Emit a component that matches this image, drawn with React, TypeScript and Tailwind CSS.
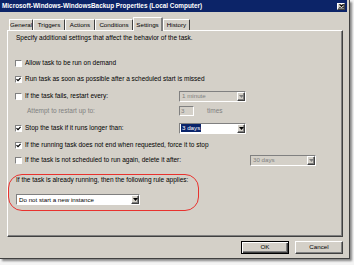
import React from 'react'

const raised = 'border border-t-white border-l-white border-r-[#404040] border-b-[#404040] shadow-[inset_-1px_-1px_0_#808080]'
const sunken = 'border border-t-[#808080] border-l-[#808080] border-r-white border-b-white'

function Arrow({ disabled = false }: { disabled?: boolean }) {
  return (
    <span className={`flex-shrink-0 w-[8px] h-full bg-[#d4d0c8] flex items-center justify-center ${raised}`}>
      <svg width="5" height="3" viewBox="0 0 5 3">
        <path d="M0 0h5L2.5 3z" fill={disabled ? '#808080' : '#000'} />
      </svg>
    </span>
  )
}

function Combo({ value, width, disabled = false, selected = false }: { value: string; width: string; disabled?: boolean; selected?: boolean }) {
  return (
    <div className={`flex h-[11px] text-[6.2px] ${width} ${sunken} ${disabled ? 'bg-[#d4d0c8]' : 'bg-white'}`}>
      <div className="flex-1 flex items-center pl-px min-w-0">
        <span
          className={`leading-[8px] px-px ${selected ? 'bg-[#0a246a] text-white' : disabled ? 'text-[#808080]' : 'text-black'}`}
        >
          {value}
        </span>
      </div>
      <Arrow disabled={disabled} />
    </div>
  )
}

function Check({ checked = false }: { checked?: boolean }) {
  return (
    <span className={`flex-shrink-0 w-[7px] h-[7px] bg-white flex items-center justify-center ${sunken}`}>
      {checked && (
        <svg width="5" height="5" viewBox="0 0 5 5">
          <path d="M0.5 2.2 L2 3.7 L4.6 0.8" stroke="#000" strokeWidth="1.2" fill="none" />
        </svg>
      )}
    </span>
  )
}

function CheckRow({ label, checked, mt, children, labelW }: { label: string; checked?: boolean; mt: string; children?: React.ReactNode; labelW?: string }) {
  return (
    <div className={`flex items-center h-[10px] ${mt}`}>
      <div className={`flex items-center gap-[3px] ${labelW ?? ''}`}>
        <Check checked={checked} />
        <span className="whitespace-nowrap">{label}</span>
      </div>
      {children}
    </div>
  )
}

const tabs = [
  { name: 'General', w: 'w-[24px]' },
  { name: 'Triggers', w: 'w-[32px]' },
  { name: 'Actions', w: 'w-[30px]' },
  { name: 'Conditions', w: 'w-[38px]' },
  { name: 'Settings', w: 'w-[30px]', active: true },
  { name: 'History', w: 'w-[27px]' },
]

export default function App() {
  return (
    <div className="w-[354px] h-[265px] bg-[#f4f4f4] font-['Liberation_Sans',Arial,sans-serif] text-[6.5px] text-black overflow-hidden">
      <div className="w-[350px] h-[259px] bg-[#d4d0c8] border-r border-b border-[#404040] shadow-[2px_2px_2px_rgba(0,0,0,0.45)] flex flex-col">
        {/* title bar */}
        <div className="h-[12px] w-[347px] bg-[#0c2468] flex items-center justify-between pl-[2px] pr-[2px]">
          <span className="text-white font-bold text-[6.4px] whitespace-nowrap">
            Microsoft-Windows-WindowsBackup Properties (Local Computer)
          </span>
          <span className={`w-[8px] h-[7px] bg-[#d4d0c8] flex items-center justify-center ${raised}`}>
            <svg width="5" height="4" viewBox="0 0 5 4">
              <path d="M0.5 0.3 L4.5 3.7 M4.5 0.3 L0.5 3.7" stroke="#000" strokeWidth="1.1" />
            </svg>
          </span>
        </div>

        <div className="flex flex-col pl-[7px] pr-[6px]">
          {/* tabs */}
          <div className="flex items-end h-[13px] mt-[5px] pl-[2px] relative z-10 text-[6.2px]">
            {tabs.map(t =>
              t.active ? (
                <div
                  key={t.name}
                  className={`${t.w} h-[14px] -mb-px bg-[#d4d0c8] border-t border-l border-white border-r-2 border-r-[#808080] rounded-t-[1px] flex items-start justify-center pt-[2px]`}
                >
                  {t.name}
                </div>
              ) : (
                <div
                  key={t.name}
                  className={`${t.w} h-[11px] border-t border-l border-white border-r border-r-[#404040] rounded-t-[1px] flex items-center justify-center`}
                >
                  {t.name}
                </div>
              )
            )}
          </div>

          {/* panel */}
          <div className={`h-[207px] flex flex-col pl-[7px] pt-[2px] ${raised}`}>
            <div className="h-[10px] leading-[10px] pl-px whitespace-nowrap">
              Specify additional settings that affect the behavior of the task.
            </div>

            <CheckRow label="Allow task to be run on demand" mt="mt-[15px]" />
            <CheckRow label="Run task as soon as possible after a scheduled start is missed" checked mt="mt-[6px]" />
            <CheckRow label="If the task fails, restart every:" mt="mt-[7px]" labelW="w-[164px]">
              <Combo value="1 minute" width="w-[67px]" disabled />
            </CheckRow>

            <div className="flex items-center h-[10px] mt-[5px] text-[#808080]">
              <span className="w-[164px] pl-[12px] whitespace-nowrap">Attempt to restart up to:</span>
              <span className={`w-[15px] h-[10px] bg-[#d4d0c8] flex items-center pl-px text-[6.2px] ${sunken}`}>3</span>
              <span className="ml-[13px]">times</span>
            </div>

            <CheckRow label="Stop the task if it runs longer than:" checked mt="mt-[7px]" labelW="w-[164px]">
              <Combo value="3 days" width="w-[67px]" selected />
            </CheckRow>
            <CheckRow label="If the running task does not end when requested, force it to stop" checked mt="mt-[7px]" />
            <CheckRow label="If the task is not scheduled to run again, delete it after:" mt="mt-[5px]" labelW="w-[235px]">
              <Combo value="30 days" width="w-[66px]" disabled />
            </CheckRow>

            {/* highlighted rule */}
            <div className="mt-[9px] -ml-[7px] w-[191px] h-[37px] border border-[#e8322e] rounded-[14px] pl-[7px] flex flex-col">
              <div className="h-[10px] leading-[10px] whitespace-nowrap">
                If the task is already running, then the following rule applies:
              </div>
              <div className="mt-[9px]">
                <Combo value="Do not start a new instance" width="w-[124px]" />
              </div>
            </div>
          </div>

          {/* buttons */}
          <div className="flex justify-end gap-[6px] mt-[4px]">
            <button className="w-[48px] h-[13px] bg-[#d4d0c8] border border-black shadow-[inset_1px_1px_0_#fff,inset_-1px_-1px_0_#404040,inset_-2px_-2px_0_#808080] text-[6.2px] leading-none">
              OK
            </button>
            <button className={`w-[48px] h-[13px] bg-[#d4d0c8] text-[6.2px] leading-none ${raised}`}>Cancel</button>
          </div>
        </div>
      </div>
    </div>
  )
}
